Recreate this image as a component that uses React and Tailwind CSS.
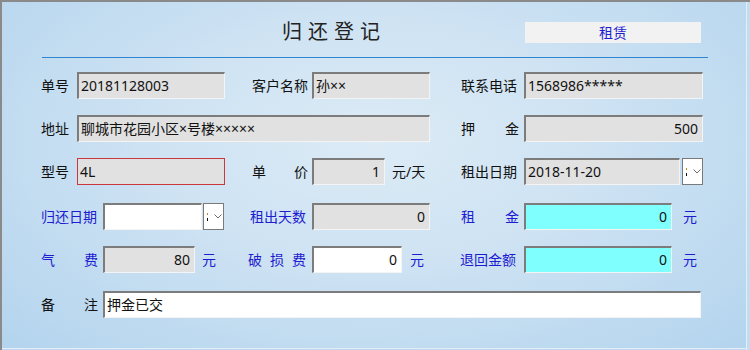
import React from "react";

const BLUE = "text-[#1c1cd0]";

function Label({ w, children, blue, spread, pr = 0 }) {
  const chars = spread ? children.split(" ") : null;
  return (
    <div
      className={`shrink-0 h-[27px] flex items-center text-[14px] leading-none ${blue ? BLUE : "text-[#111]"}`}
      style={{ width: w, paddingRight: pr }}
    >
      {spread ? (
        <div className="flex w-full justify-between">
          {chars.map((c, i) => (
            <span key={i}>{c}</span>
          ))}
        </div>
      ) : (
        <span>{children}</span>
      )}
    </div>
  );
}

function Field({ w, value = "", kind = "gray", right, red }) {
  const bg =
    kind === "white" ? "bg-white" : kind === "cyan" ? "bg-[#80ffff]" : "bg-[#e1e1e1]";
  const border = red
    ? "border border-[#c8383c]"
    : "border-t-2 border-l-2 border-r border-b border-t-[#7c7c7c] border-l-[#7c7c7c] border-r-[#f4f4f4] border-b-[#f4f4f4]";
  return (
    <div
      className={`shrink-0 h-[27px] flex items-center ${bg} ${border} ${right ? "justify-end pr-[4px]" : "pl-[2px]"} text-[14px] leading-none text-[#111] whitespace-nowrap`}
      style={{ width: w }}
    >
      {value}
    </div>
  );
}

function Drop({ ml }) {
  return (
    <div
      className="shrink-0 h-[27px] w-[21px] bg-white border border-[#7a7a7a] flex items-center relative"
      style={{ marginLeft: ml }}
    >
      <span className="ml-[3px] flex flex-col gap-[3px]">
        <span className="block w-[1px] h-[2px] bg-[#b58d20]"></span>
        <span className="block w-[1px] h-[3px] bg-[#111]"></span>
      </span>
      <svg className="ml-[6px]" width="8" height="5" viewBox="0 0 8 5">
        <polyline points="0.5,0.5 4,4 7.5,0.5" fill="none" stroke="#6b6b6b" strokeWidth="1" />
      </svg>
    </div>
  );
}

function Unit({ w, children, ml, blue = true }) {
  return (
    <div
      className={`shrink-0 h-[27px] flex items-center text-[14px] leading-none ${blue ? BLUE : "text-[#111]"}`}
      style={{ width: w, marginLeft: ml }}
    >
      {children}
    </div>
  );
}

export default function App() {
  return (
    <div
      className="w-[750px] h-[350px] overflow-hidden border-t-2 border-l-2 border-[#8a8a8a] bg-[radial-gradient(ellipse_at_50%_40%,#dcebf6_0%,#cfe3f3_40%,#b3d4ee_100%)] shadow-[inset_-3px_0_0_#c4dcef,inset_-4px_0_0_#e4eef6,inset_0_-1px_0_#bdd8ee,inset_0_-2px_0_#e4eef6] font-['Noto_Sans','Noto_Sans_CJK_SC',sans-serif]"
    >
      {/* header */}
      <div className="flex h-[55px] items-start">
        <div className="ml-[280px] mt-[17px] h-[24px] leading-[24px] text-[20px] tracking-[6px] text-[#222] whitespace-nowrap font-['Noto_Sans_CJK_SC',sans-serif]">
          归还登记
        </div>
        <div className="ml-[139px] mt-[20px] w-[176px] h-[21px] bg-[#f2f2f2] flex items-center justify-center text-[14px] leading-none text-[#1c1cd0]">
          租赁
        </div>
      </div>
      <div className="ml-[40px] w-[666px] h-px bg-[#2f86d0]"></div>

      <div className="pl-[39px] flex flex-col">
        {/* row 1 */}
        <div className="flex items-center mt-[14px]">
          <Label w={36}>单号</Label>
          <Field w={148} value="20181128003" />
          <div className="w-[27px] shrink-0"></div>
          <Label w={60}>客户名称</Label>
          <Field w={118} value="孙××" />
          <div className="w-[31px] shrink-0"></div>
          <Label w={63}>联系电话</Label>
          <Field w={179} value="1568986*****" />
        </div>

        {/* row 2 */}
        <div className="flex items-center mt-[16px]">
          <Label w={36}>地址</Label>
          <Field w={353} value="聊城市花园小区×号楼×××××" />
          <div className="w-[31px] shrink-0"></div>
          <Label w={63} spread pr={5}>押 金</Label>
          <Field w={179} value="500" right />
        </div>

        {/* row 3 */}
        <div className="flex items-center mt-[16px]">
          <Label w={36}>型号</Label>
          <Field w={148} value="4L" red />
          <div className="w-[27px] shrink-0"></div>
          <Label w={60} spread pr={4}>单 价</Label>
          <Field w={73} value="1" right />
          <Unit w={69} ml={7} blue={false}>元/天</Unit>
          <Label w={63}>租出日期</Label>
          <Field w={156} value="2018-11-20" />
          <Drop ml={2} />
        </div>

        {/* row 4 */}
        <div className="flex items-center mt-[18px]">
          <Label w={62} blue>归还日期</Label>
          <Field w={99} kind="white" />
          <Drop ml={1} />
          <div className="w-[26px] shrink-0"></div>
          <Label w={62} blue>租出天数</Label>
          <Field w={118} value="0" right />
          <div className="w-[31px] shrink-0"></div>
          <Label w={63} blue spread pr={5}>租 金</Label>
          <Field w={148} value="0" kind="cyan" right />
          <Unit w={20} ml={11}>元</Unit>
        </div>

        {/* row 5 */}
        <div className="flex items-center mt-[16px]">
          <Label w={62} blue spread pr={5}>气 费</Label>
          <Field w={92} value="80" right />
          <Unit w={46} ml={7}>元</Unit>
          <Label w={64} blue spread pr={6}>破 损 费</Label>
          <Field w={90} value="0" kind="white" right />
          <Unit w={50} ml={8}>元</Unit>
          <Label w={64} blue>退回金额</Label>
          <Field w={148} value="0" kind="cyan" right />
          <Unit w={20} ml={11}>元</Unit>
        </div>

        {/* row 6 */}
        <div className="flex items-center mt-[18px]">
          <Label w={62} spread pr={5}>备 注</Label>
          <Field w={598} value="押金已交" kind="white" />
        </div>
      </div>
    </div>
  );
}
